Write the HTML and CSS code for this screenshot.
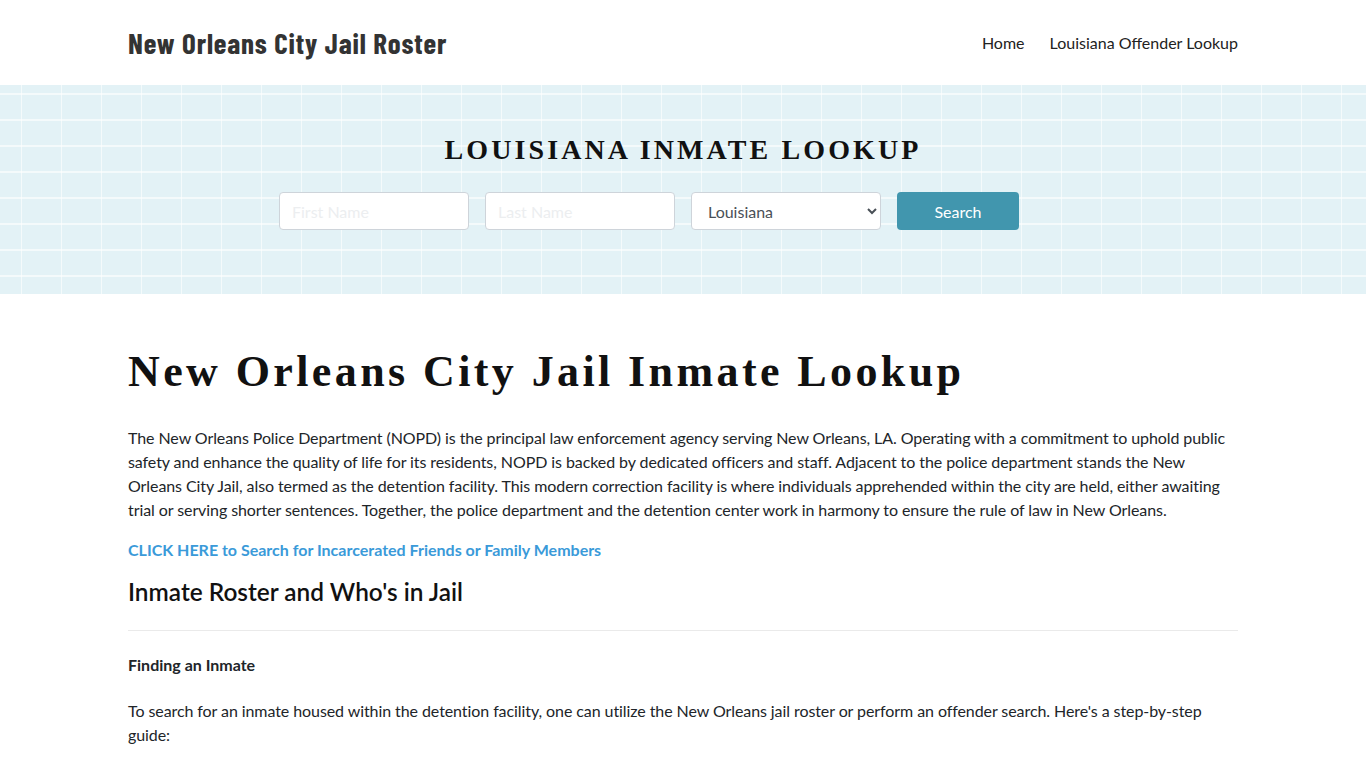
FILE: index.html
```html
<!DOCTYPE html>
<html lang="en">
<head>
<meta charset="utf-8">
<title>New Orleans City Jail Roster</title>
<link rel="stylesheet" href="styles.css">
</head>
<body>
<header class="site-header">
  <div class="container header-row">
    <a class="brand" href="#">New Orleans City Jail Roster</a>
    <nav class="nav">
      <a href="#">Home</a>
      <a href="#">Louisiana Offender Lookup</a>
    </nav>
  </div>
</header>
<section class="banner">
  <div class="container">
    <h2 class="banner-title">LOUISIANA INMATE LOOKUP</h2>
    <form class="search-form">
      <input class="field" type="text" placeholder="First Name">
      <input class="field" type="text" placeholder="Last Name">
      <select class="field select">
        <option>Louisiana</option>
      </select>
      <button class="btn" type="button">Search</button>
    </form>
  </div>
</section>
<main class="container main">
  <h1 class="page-title">New Orleans City Jail Inmate Lookup</h1>
  <p class="para">The New Orleans Police Department (NOPD) is the principal law enforcement agency serving New Orleans, LA. Operating with a commitment to uphold public safety and enhance the quality of life for its residents, NOPD is backed by dedicated officers and staff. Adjacent to the police department stands the New Orleans City Jail, also termed as the detention facility. This modern correction facility is where individuals apprehended within the city are held, either awaiting trial or serving shorter sentences. Together, the police department and the detention center work in harmony to ensure the rule of law in New Orleans.</p>
  <p class="cta"><a href="#">CLICK HERE to Search for Incarcerated Friends or Family Members</a></p>
  <h2 class="section-title">Inmate Roster and Who's in Jail</h2>
  <hr class="rule">
  <h3 class="sub-title">Finding an Inmate</h3>
  <p class="para">To search for an inmate housed within the detention facility, one can utilize the New Orleans jail roster or perform an offender search. Here's a step-by-step guide:</p>
</main>
</body>
</html>
```
FILE: styles.css
```css
* { box-sizing: border-box; }
body {
  margin: 0;
  font-family: Lato, "Open Sans", sans-serif;
  font-size: 16px;
  line-height: 24px;
  color: #212529;
  background: #fff;
}
a { text-decoration: none; }
.container {
  width: 1140px;
  margin: 0 auto;
  padding: 0 15px;
}
.site-header { height: 85px; }
.header-row {
  height: 85px;
  display: flex;
  align-items: center;
  justify-content: space-between;
}
.brand {
  font-family: "Barlow Condensed", "Roboto Condensed", "Liberation Sans Narrow", "DejaVu Sans Condensed", "DejaVu Sans", sans-serif;
  font-stretch: condensed;
  font-weight: 700;
  font-size: 29px;
  color: #333;
  letter-spacing: 0.85px;
}
.nav { display: flex; gap: 25px; }
.nav a { color: #222; font-size: 16px; }
.banner {
  height: 209px;
  background-color: #e3f2f6;
  background-image:
    linear-gradient(90deg, rgba(255,255,255,0.6) 1.5px, transparent 1.5px),
    linear-gradient(0deg, rgba(255,255,255,0.6) 1.5px, transparent 1.5px);
  background-size: 40px 26px;
  background-position: 21px 10px;
  padding-top: 45px;
}
.banner-title {
  margin: 0;
  text-align: center;
  font-family: "Liberation Serif", serif;
  font-weight: 700;
  font-size: 28px;
  line-height: 40px;
  letter-spacing: 3.1px;
  color: #111;
}
.search-form {
  margin-top: 22px;
  display: flex;
  gap: 16px;
  justify-content: center;
  padding-right: 68px;
}
.field {
  width: 190px;
  height: 38px;
  border: 1px solid #ced4da;
  border-radius: 4px;
  background: #fff;
  font-family: Lato, sans-serif;
  font-size: 16px;
  padding: 0 12px;
  color: #495057;
}
.field::placeholder { color: #eceef0; }
.select { padding: 0 10px 0 12px; }
.btn {
  width: 122px;
  height: 38px;
  border: 0;
  border-radius: 4px;
  background: #4196ae;
  color: #fff;
  font-family: Lato, sans-serif;
  font-size: 16px;
}
.main { padding-top: 51px; padding-bottom: 40px; }
.page-title {
  margin: 0;
  font-family: "Liberation Serif", serif;
  font-weight: 700;
  font-size: 44px;
  line-height: 53px;
  letter-spacing: 3.4px;
  color: #111;
}
.para { margin: 28px 0 0; letter-spacing: -0.08px; }
.cta { margin: 16px 0 0; }
.cta a { color: #3a9ad9; font-weight: 700; }
.section-title {
  margin: 14px 0 0;
  font-size: 24.4px;
  line-height: 31px;
  font-weight: 600;
  color: #111;
}
.rule {
  margin: 23px 0 0;
  border: 0;
  border-top: 1px solid #eaeaea;
}
.sub-title {
  margin: 22px 0 0;
  font-size: 16px;
  line-height: 24px;
  font-weight: 700;
  color: #212529;
}
.sub-title + .para { margin-top: 22px; }
```
